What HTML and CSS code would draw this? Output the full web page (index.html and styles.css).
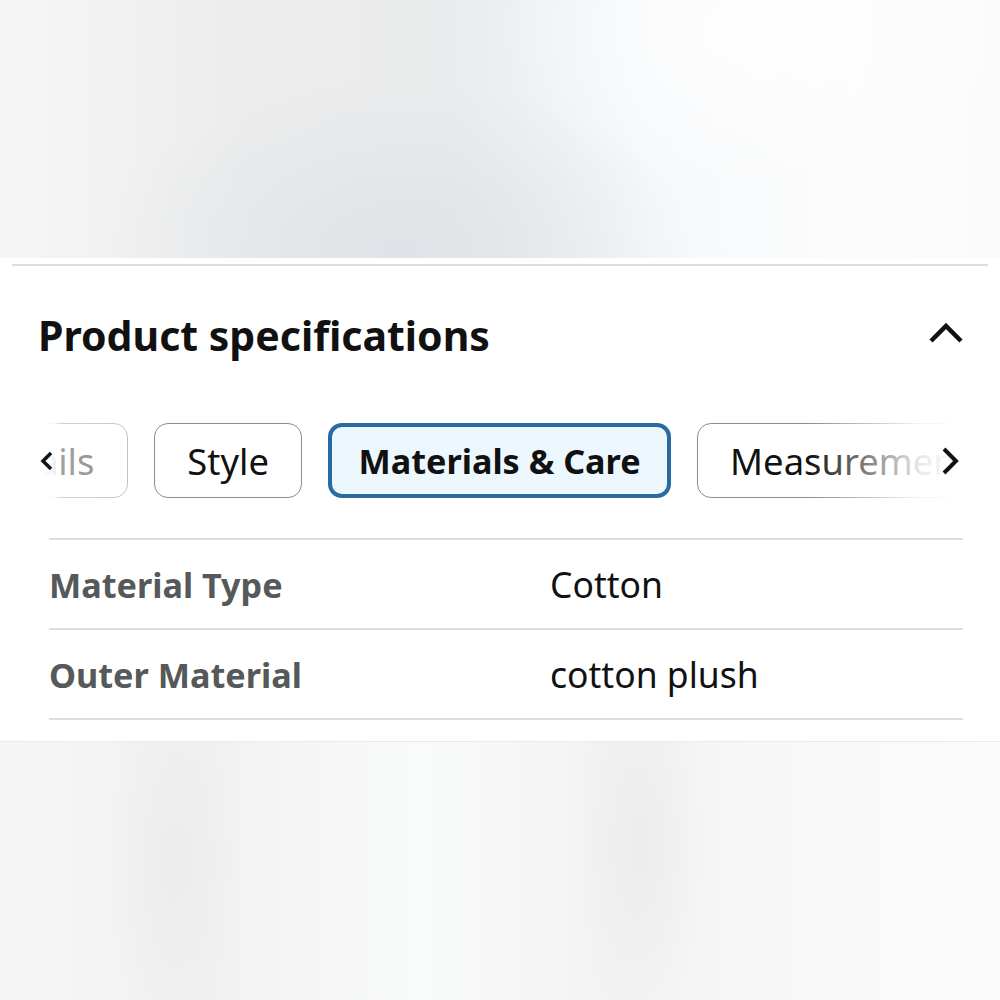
FILE: index.html
```html
<!DOCTYPE html>
<html lang="en">
<head>
    <meta charset="UTF-8">
    <meta name="viewport" content="width=device-width, initial-scale=1.0">
    <title>Product specifications</title>
    <link rel="stylesheet" href="styles.css">
</head>
<body>
    <div class="page">
        <div class="blur-top"></div>

        <section class="specs">
            <div class="specs-header">
                <h2>Product specifications</h2>
                <svg class="collapse" width="36" height="22" viewBox="0 0 36 22">
                    <path d="M3 19 L18 4 L33 19" fill="none" stroke="#111" stroke-width="4.5"/>
                </svg>
            </div>

            <div class="tabs">
                <div class="tab-track">
                    <button class="tab">Details</button>
                    <button class="tab">Style</button>
                    <button class="tab active">Materials &amp; Care</button>
                    <button class="tab">Measurements</button>
                </div>
                <span class="fade fade-left">
                    <svg width="14" height="20" viewBox="0 0 14 20"><path d="M11 2 L3 10 L11 18" fill="none" stroke="#111" stroke-width="3.5"/></svg>
                </span>
                <span class="fade fade-right">
                    <svg width="18" height="30" viewBox="0 0 18 30"><path d="M3 3 L15 15 L3 27" fill="none" stroke="#111" stroke-width="4"/></svg>
                </span>
            </div>

            <table class="spec-table">
                <tr>
                    <th>Material Type</th>
                    <td>Cotton</td>
                </tr>
                <tr>
                    <th>Outer Material</th>
                    <td>cotton plush</td>
                </tr>
            </table>
        </section>

        <div class="blur-bottom"></div>
    </div>
</body>
</html>
```

FILE: styles.css
```css
body {
    margin: 0;
    font-family: "Noto Sans", "Open Sans", Arial, sans-serif;
    background-color: #f4f4f4;
}

.page {
    display: flex;
    flex-direction: column;
    height: 1000px;
}

.blur-top {
    height: 258px;
    background:
        radial-gradient(ellipse 260px 160px at 760px 30px, #fefefe 0%, rgba(254, 254, 254, 0) 100%),
        radial-gradient(ellipse 300px 170px at 400px 250px, #dfe3e7 0%, rgba(223, 227, 231, 0) 100%),
        linear-gradient(90deg, #f6f6f6 0%, #ececec 25%, #eaebec 45%, #f6f8fa 65%, #fcfcfc 85%, #fbfbfb 100%);
}

.specs {
    background-color: #fff;
    padding: 6px 0 21px;
}

.specs::before {
    content: "";
    display: block;
    height: 2px;
    margin: 0 12px;
    background-color: #dcdcdc; /* divider above the section */
}

.specs-header {
    display: flex;
    justify-content: space-between;
    align-items: center;
    padding: 36px 36px 0 38px;
    height: 66px;
}

.specs-header h2 {
    margin: 0;
    font-size: 41px;
    font-weight: 700;
    color: #111;
}

.collapse {
    margin-top: -4px;
}

.tabs {
    position: relative;
    margin: 55px 38px 0 38px;
    overflow: hidden;
}

.tab-track {
    display: flex;
    gap: 26px;
    margin-left: -94px; /* scrolled position of the strip */
}

.tab {
    flex: none;
    height: 75px;
    padding: 0 32.5px;
    border: 1.5px solid #8c8c8c;
    border-radius: 14px;
    background-color: #fff;
    font-family: inherit;
    font-size: 36.4px;
    color: #111;
}

.tab.active {
    border: 4px solid #2a6aa3;
    background-color: #edf7fe;
    font-size: 34.2px;
    font-weight: 700;
    padding: 0 26px;
}

.fade {
    position: absolute;
    top: 0;
    bottom: 0;
    display: flex;
    align-items: center;
}

.fade-left {
    left: 0;
    width: 96px;
    padding-left: 2px;
    background: linear-gradient(90deg, #fff 0%, rgba(255, 255, 255, 0.95) 16%, rgba(255, 255, 255, 0.6) 24%, rgba(255, 255, 255, 0.55) 70%, rgba(255, 255, 255, 0.45) 100%);
}

.fade-right {
    right: 0;
    width: 150px;
    padding-right: 3px;
    justify-content: flex-end;
    background: linear-gradient(90deg, rgba(255, 255, 255, 0) 0%, rgba(255, 255, 255, 0.9) 72%, #fff 100%);
}

.spec-table {
    width: calc(100% - 86px);
    margin: 40px 37px 0 49px;
    border-collapse: collapse;
    border-top: 2px solid #dedede;
}

.spec-table tr {
    border-bottom: 2px solid #dedede;
}

.spec-table th,
.spec-table td {
    height: 88px;
    padding: 0;
    text-align: left;
}

.spec-table th {
    width: 501px;
    font-size: 34.2px;
    font-weight: 700;
    color: #565959;
}

.spec-table td {
    font-size: 35.5px;
    color: #111;
}

.blur-bottom {
    flex: 1;
    border-top: 1px solid #eaeaea;
    background:
        radial-gradient(ellipse 70px 200px at 175px 120px, #ececec 0%, rgba(236, 236, 236, 0) 100%),
        radial-gradient(ellipse 70px 200px at 640px 100px, #ececec 0%, rgba(236, 236, 236, 0) 100%),
        linear-gradient(90deg, #f6f6f6 0%, #f1f1f1 20%, #f9fafa 42%, #f3f3f3 60%, #f9f9f9 85%, #fbfbfb 100%);
}
```
